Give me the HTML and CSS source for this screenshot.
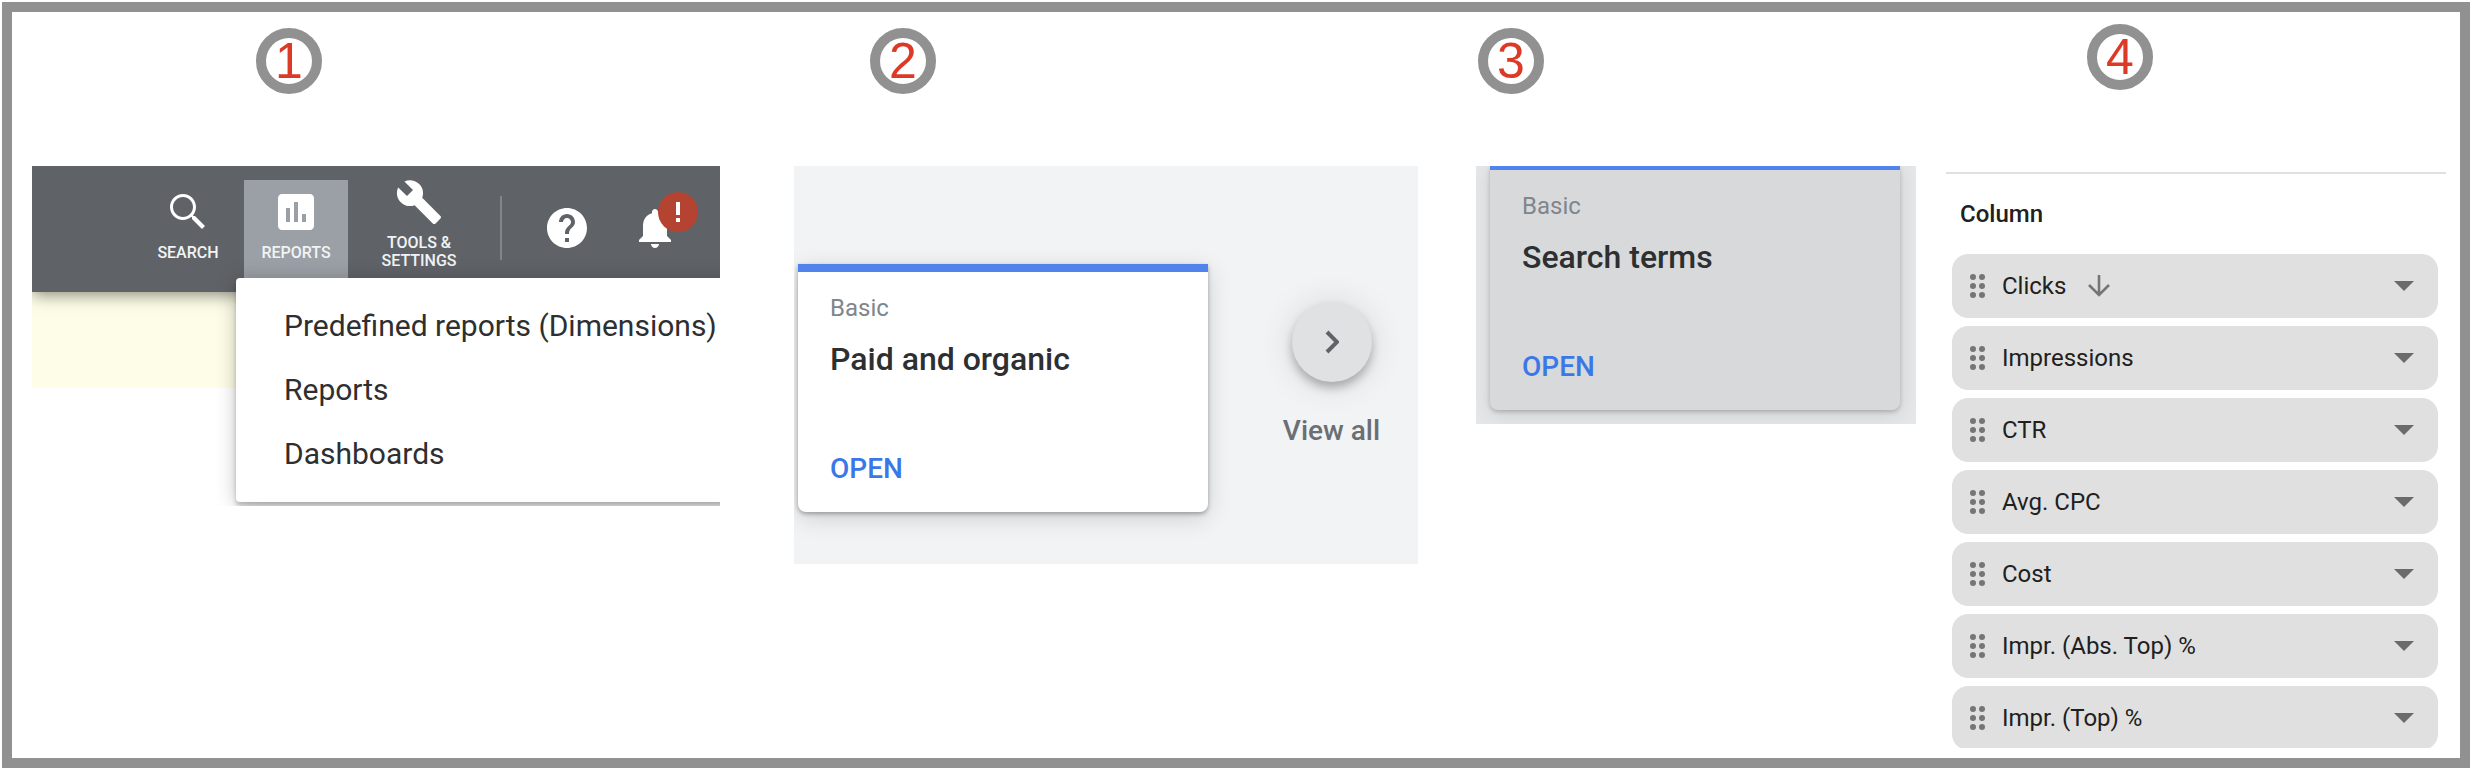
FILE: index.html
```
<!DOCTYPE html>
<html lang="en">
  <head>
    <meta charset="UTF-8" />
    <title>Search terms report</title>
    <link rel="stylesheet" href="styles.css">
  </head>
  <body>
    <main class="frame">
      <section class="step step-nav">
        <div class="step-head"><span class="step-number">1</span></div>
        <div class="shot nav-shot">
          <header class="toolbar">
            <button class="tool">
              <svg class="icon" viewBox="0 0 24 24"><path d="M15.5 14h-.79l-.28-.27C15.41 12.59 16 11.11 16 9.5 16 5.91 13.09 3 9.5 3S3 5.91 3 9.5 5.91 16 9.5 16c1.61 0 3.09-.59 4.23-1.57l.27.28v.79l5 4.99L20.49 19l-4.99-5zm-6 .5c-2.76 0-5-2.24-5-5s2.24-5 5-5 5 2.24 5 5-2.24 5-5 5z"/></svg>
              <span class="tool-label">SEARCH</span>
            </button>
            <button class="tool active">
              <svg class="icon" viewBox="0 0 24 24"><path d="M19 3H5c-1.1 0-2 .9-2 2v14c0 1.1.9 2 2 2h14c1.1 0 2-.9 2-2V5c0-1.1-.9-2-2-2zM9 17H7v-7h2v7zm4 0h-2V7h2v10zm4 0h-2v-4h2v4z"/></svg>
              <span class="tool-label">REPORTS</span>
            </button>
            <button class="tool tool-wide">
              <svg class="icon" viewBox="0 0 24 24"><path d="M22.7 19l-9.1-9.1c.9-2.3.4-5-1.5-6.9-2-2-5-2.4-7.4-1.3L9 6 6 9 1.6 4.7C.4 7.1.9 10.1 2.9 12.1c1.9 1.9 4.6 2.4 6.9 1.5l9.1 9.1c.4.4 1 .4 1.4 0l2.3-2.3c.5-.4.5-1.1.1-1.4z"/></svg>
              <span class="tool-label">TOOLS &amp;<br>SETTINGS</span>
            </button>
            <div class="toolbar-end">
              <button class="icon-button" aria-label="Help">
                <svg class="icon" viewBox="0 0 24 24"><path d="M12 2C6.48 2 2 6.48 2 12s4.48 10 10 10 10-4.48 10-10S17.52 2 12 2zm1 17h-2v-2h2v2zm2.07-7.75l-.9.92C13.45 12.9 13 13.5 13 15h-2v-.5c0-1.1.45-2.1 1.17-2.83l1.24-1.26c.37-.36.59-.86.59-1.41 0-1.1-.9-2-2-2s-2 .9-2 2H8c0-2.21 1.79-4 4-4s4 1.79 4 4c0 .88-.36 1.68-.93 2.25z"/></svg>
              </button>
              <button class="icon-button" aria-label="Notifications">
                <svg class="icon" viewBox="0 0 24 24"><path d="M12 22c1.1 0 2-.9 2-2h-4c0 1.1.89 2 2 2zm6-6v-5c0-3.07-1.64-5.64-4.5-6.32V4c0-.83-.67-1.5-1.5-1.5s-1.5.67-1.5 1.5v.68C7.63 5.36 6 7.92 6 11v5l-2 2v1h16v-1l-2-2z"/></svg>
                <svg class="alert" viewBox="0 0 40 40"><circle cx="20" cy="20" r="20" fill="#b44431"/><path fill="#fff" d="M18 10h4v13h-4zM18 26h4v4h-4z"/></svg>
              </button>
            </div>
          </header>
          <div class="notice"></div>
          <nav class="menu">
            <a class="menu-item" href="#">Predefined reports (Dimensions)</a>
            <a class="menu-item" href="#">Reports</a>
            <a class="menu-item" href="#">Dashboards</a>
          </nav>
        </div>
      </section>

      <section class="step step-gallery">
        <div class="step-head"><span class="step-number">2</span></div>
        <div class="shot gallery-shot">
          <article class="card">
            <div class="card-type">Basic</div>
            <h2 class="card-title">Paid and organic</h2>
            <a class="card-link" href="#">OPEN</a>
          </article>
          <div class="view-all">
            <button class="round-button" id="viewAll" aria-labelledby="viewAllLabel">
              <svg class="chevron" viewBox="0 0 14 24"><path d="M2 2l10 10L2 22" fill="none" stroke="#5f6368" stroke-width="4"/></svg>
            </button>
            <label class="view-all-label" id="viewAllLabel" for="viewAll">View all</label>
          </div>
        </div>
      </section>

      <section class="step step-terms">
        <div class="step-head"><span class="step-number">3</span></div>
        <div class="shot terms-shot">
          <article class="card card-selected">
            <div class="card-type">Basic</div>
            <h2 class="card-title">Search terms</h2>
            <a class="card-link" href="#">OPEN</a>
          </article>
        </div>
      </section>

      <section class="step step-columns">
        <div class="step-head"><span class="step-number">4</span></div>
        <div class="columns-shot">
          <h3 class="columns-title">Column</h3>
          <div class="column-list">
            <button class="column-item">
              <svg class="handle" viewBox="0 0 16 26"><use href="#dots"/></svg>
              Clicks
              <svg class="sort" viewBox="0 0 22 24"><path d="M11 1v20M1 11l10 10 10-10" fill="none" stroke="#757575" stroke-width="2.6"/></svg>
              <svg class="caret" viewBox="0 0 20 10"><path d="M0 0h20L10 10z"/></svg>
            </button>
            <button class="column-item">
              <svg class="handle" viewBox="0 0 16 26"><use href="#dots"/></svg>
              Impressions
              <svg class="caret" viewBox="0 0 20 10"><path d="M0 0h20L10 10z"/></svg>
            </button>
            <button class="column-item">
              <svg class="handle" viewBox="0 0 16 26"><use href="#dots"/></svg>
              CTR
              <svg class="caret" viewBox="0 0 20 10"><path d="M0 0h20L10 10z"/></svg>
            </button>
            <button class="column-item">
              <svg class="handle" viewBox="0 0 16 26"><use href="#dots"/></svg>
              Avg. CPC
              <svg class="caret" viewBox="0 0 20 10"><path d="M0 0h20L10 10z"/></svg>
            </button>
            <button class="column-item">
              <svg class="handle" viewBox="0 0 16 26"><use href="#dots"/></svg>
              Cost
              <svg class="caret" viewBox="0 0 20 10"><path d="M0 0h20L10 10z"/></svg>
            </button>
            <button class="column-item">
              <svg class="handle" viewBox="0 0 16 26"><use href="#dots"/></svg>
              Impr. (Abs. Top) %
              <svg class="caret" viewBox="0 0 20 10"><path d="M0 0h20L10 10z"/></svg>
            </button>
            <button class="column-item">
              <svg class="handle" viewBox="0 0 16 26"><use href="#dots"/></svg>
              Impr. (Top) %
              <svg class="caret" viewBox="0 0 20 10"><path d="M0 0h20L10 10z"/></svg>
            </button>
          </div>
        </div>
      </section>
    </main>

    <!-- shared drag handle -->
    <svg class="defs" width="0" height="0">
      <defs>
        <g id="dots">
          <circle cx="3" cy="4" r="3"/><circle cx="12" cy="4" r="3"/>
          <circle cx="3" cy="13" r="3"/><circle cx="12" cy="13" r="3"/>
          <circle cx="3" cy="22" r="3"/><circle cx="12" cy="22" r="3"/>
        </g>
      </defs>
    </svg>
  </body>
</html>
```
FILE: styles.css
```
:root {
  --frame-gray: #919191;
  --number-red: #dc3a26;
  --toolbar: #5f6368;
  --blue: #5083ec;
  --link-blue: #3b78e7;
  --text: #2d2f31;
}

* {
  margin: 0;
  padding: 0;
  box-sizing: border-box;
}

body {
  font-family: Roboto, Arial, sans-serif;
  background-color: #fff;
  color: var(--text);
  padding: 2px;
}

button {
  font-family: inherit;
  border: none;
  background: none;
  cursor: pointer;
}

a {
  text-decoration: none;
}

.defs {
  position: absolute;
}

.frame {
  display: grid;
  grid-template-columns: 708fr 698fr 498fr 544fr;
  border: 10px solid var(--frame-gray);
  min-height: calc(100vh - 4px);
  padding-bottom: 8px;
}

/* Steps */
.step {
  min-width: 0;
}

.step-nav {
  padding-left: 20px;
}

.step-gallery {
  padding-left: 74px;
}

.step-terms {
  padding-left: 58px;
}

.step-columns {
  padding: 0 14px 0 30px;
}

.step-head {
  height: 154px;
  padding-top: 16px;
}

.step-nav .step-head {
  padding-left: 224px;
}

.step-gallery .step-head {
  padding-left: 76px;
}

.step-terms .step-head {
  padding-left: 2px;
}

.step-columns .step-head {
  padding-top: 12px;
  padding-left: 141px;
}

.step-number {
  display: flex;
  align-items: center;
  justify-content: center;
  width: 66px;
  height: 66px;
  border: 10px solid var(--frame-gray);
  border-radius: 50%;
  font-family: "Liberation Sans", Arial, sans-serif;
  font-size: 50px;
  line-height: 46px;
  color: var(--number-red);
}

.shot {
  overflow: hidden;
}

/* Toolbar and reports menu */
.nav-shot {
  position: relative;
  height: 340px;
}

.toolbar {
  position: relative;
  display: flex;
  justify-content: flex-end;
  gap: 4px;
  height: 126px;
  background-color: var(--toolbar);
  box-shadow: 0 2px 16px rgba(0, 0, 0, 0.5);
}

.icon {
  display: block;
  width: 48px;
  height: 48px;
  fill: #fff;
}

.tool {
  display: flex;
  flex-direction: column;
  align-items: center;
  gap: 8px;
  width: 104px;
  height: 112px;
  margin-top: 14px;
  padding-top: 8px;
}

.tool.active {
  background-color: #9aa0a5;
}

.tool-wide {
  width: 134px;
  margin-top: 4px;
}

.tool-label {
  font-size: 16px;
  font-weight: 500;
  line-height: 18px;
  color: #f1f3f4;
}

.toolbar-end {
  display: flex;
  align-items: center;
  align-self: flex-start;
  gap: 40px;
  height: 64px;
  margin: 30px 41px 0 10px;
  padding-left: 41px;
  border-left: 2px solid #80868b;
}

.icon-button {
  position: relative;
  width: 48px;
  height: 48px;
}

.alert {
  position: absolute;
  top: -12px;
  right: -19px;
  width: 40px;
  height: 40px;
}

.notice {
  height: 96px;
  background-color: #fefde7;
}

.menu {
  position: absolute;
  top: 112px;
  left: 204px;
  right: -20px;
  padding: 16px 48px;
  background-color: #fff;
  border-radius: 4px;
  box-shadow: 0 4px 4px rgba(0, 0, 0, 0.2), 0 2px 20px rgba(0, 0, 0, 0.25);
}

.menu-item {
  display: block;
  font-size: 30px;
  line-height: 64px;
  color: var(--text);
  white-space: nowrap;
}

/* Report cards */
.gallery-shot {
  display: flex;
  align-items: flex-start;
  padding: 98px 0 52px 4px;
  background-color: #f1f3f4;
}

.card {
  flex: none;
  width: 410px;
  padding: 21px 32px 27px;
  background-color: #fff;
  border-top: 8px solid var(--blue);
  border-radius: 0 0 8px 8px;
  box-shadow: 0 2px 4px rgba(0, 0, 0, 0.3), 0 6px 24px rgba(0, 0, 0, 0.15);
}

.card-type {
  font-size: 24px;
  line-height: 30px;
  color: #80868b;
}

.card-title {
  margin: 16px 0 74px;
  font-size: 32px;
  font-weight: 500;
  line-height: 40px;
}

.card-link {
  display: block;
  font-size: 28px;
  font-weight: 500;
  line-height: 32px;
  color: var(--link-blue);
}

.view-all {
  display: flex;
  flex: 1;
  flex-direction: column;
  align-items: center;
  gap: 33px;
  padding: 38px 0 0 37px;
}

.round-button {
  display: flex;
  align-items: center;
  justify-content: center;
  width: 80px;
  height: 80px;
  border-radius: 50%;
  background-color: #e0e1e3;
  box-shadow: 0 6px 10px rgba(0, 0, 0, 0.25), 0 2px 36px rgba(0, 0, 0, 0.12);
}

.chevron {
  width: 14px;
  height: 24px;
}

.view-all-label {
  font-size: 28px;
  font-weight: 500;
  line-height: 32px;
  color: #6b6e73;
}

.terms-shot {
  padding: 0 16px 14px 14px;
  background-color: #e4e6e7;
}

.card-selected {
  width: auto;
  border-top-width: 4px;
  background-color: #d8d9db;
  box-shadow: 0 2px 4px rgba(0, 0, 0, 0.2), 0 4px 20px rgba(0, 0, 0, 0.1);
}

/* Column list */
.columns-shot {
  margin-top: 6px;
  border-top: 2px solid #e0e0e0;
}

.columns-title {
  padding: 24px 14px;
  font-size: 24px;
  font-weight: 500;
  line-height: 32px;
  color: #202020;
}

.column-list {
  display: flex;
  flex-direction: column;
  gap: 8px;
  max-height: 494px;
  padding: 0 8px 0 6px;
  overflow: hidden;
}

.column-item {
  display: flex;
  flex: none;
  align-items: center;
  height: 64px;
  padding: 0 24px 0 18px;
  border-radius: 16px;
  background-color: #e0e0e0;
  font-size: 24px;
  color: #202020;
}

.handle {
  width: 16px;
  height: 26px;
  margin-right: 16px;
  fill: #757575;
}

.sort {
  width: 22px;
  height: 24px;
  margin-left: 22px;
}

.caret {
  width: 20px;
  height: 10px;
  margin-left: auto;
  fill: #6b6b6b;
}
```
